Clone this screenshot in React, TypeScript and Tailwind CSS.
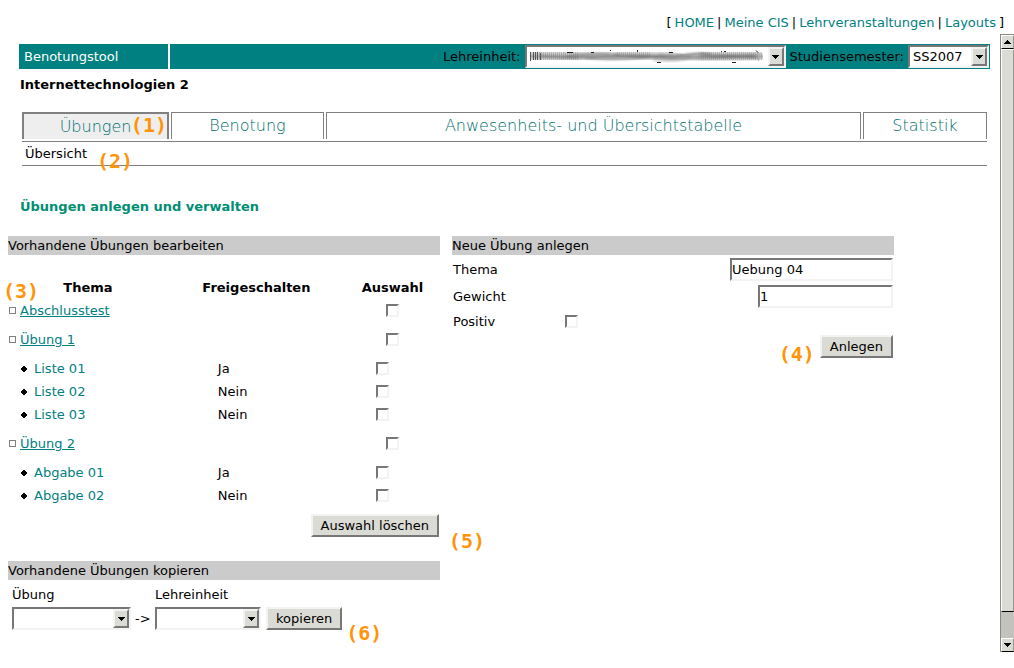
import React, { useId } from "react";

function Marker({ n, className }: { n: number; className: string }) {
  return (
    <span
      className={`pointer-events-none absolute font-['DejaVu_Sans_Mono',monospace] text-xl leading-[22px] font-bold text-[#ff9408] ${className}`}
    >
      ({n})
    </span>
  );
}

function Select({ label, options, className }: { label: string; options: string[]; className: string }) {
  return (
    <span
      className={`relative block h-[23px] border-2 border-t-[#777] border-l-[#777] border-r-[#f3f3f3] border-b-[#f3f3f3] bg-white ${className}`}
    >
      <select aria-label={label} className="block h-full w-full appearance-none bg-white pr-4 pl-[3px] text-[13px] leading-[19px] text-black outline-none">
        {options.map((o) => (
          <option key={o}>{o}</option>
        ))}
      </select>
      <span className="pointer-events-none absolute top-0 right-0 flex h-[19px] w-4 items-center justify-center border-2 border-t-[#f3f3f3] border-l-[#f3f3f3] border-r-[#777] border-b-[#777] bg-[#dbdbd5]">
        <svg width="7" height="4" viewBox="0 0 7 4" shapeRendering="crispEdges" aria-hidden="true">
          <path d="M0 0h7v1h-1v1h-1v1h-1v1h-1v-1h-1v-1h-1v-1h-1z" />
        </svg>
      </span>
    </span>
  );
}

function Button({ children }: { children: React.ReactNode }) {
  return (
    <button
      type="button"
      className="block h-[23px] border-2 border-t-[#f3f3f3] border-l-[#f3f3f3] border-r-[#777] border-b-[#777] bg-[#dbdbd5] px-2 text-[13px] leading-[19px] whitespace-nowrap text-black"
    >
      {children}
    </button>
  );
}

function Check({ label, id }: { label?: string; id?: string }) {
  return (
    <input
      type="checkbox"
      id={id}
      aria-label={label}
      className="block h-[13px] w-[13px] appearance-none border-2 border-t-[#777] border-l-[#777] border-r-[#f3f3f3] border-b-[#f3f3f3] bg-white checked:bg-gray-600"
    />
  );
}

function Smudge() {
  return (
    <svg
      className="pointer-events-none absolute top-[4px] left-1 h-[15px] w-[236px]"
      viewBox="0 0 236 15"
      aria-hidden="true"
    >
      <defs>
        <linearGradient id="smear" x1="0" x2="0" y1="0" y2="1">
          <stop offset="0" stopColor="#e0e0e0" />
          <stop offset="0.5" stopColor="#a8a8a8" />
          <stop offset="1" stopColor="#ececec" />
        </linearGradient>
        <pattern id="hatch" width="2" height="15" patternUnits="userSpaceOnUse">
          <path d="M0.5 0v15" stroke="#666" strokeWidth="1" opacity="0.3" />
        </pattern>
        <filter id="soft" x="-5%" y="-20%" width="110%" height="140%">
          <feGaussianBlur stdDeviation="0.8" />
        </filter>
      </defs>
      <path d="M1 3h142l12 2 18-2h60v8l-20 1h-40l-30-1H1z" fill="url(#smear)" />
      <path d="M10 3h40v8H10zM88 3h34v5H88zM172 3h58v8h-58z" fill="url(#hatch)" />
      <path d="M1.5 3v9M4.5 3v8M6.5 3v8M8.5 3v8M11.5 4v7" stroke="#555" strokeWidth="1" />
      <g fill="none" stroke="#777" strokeWidth="1.2" filter="url(#soft)">
        <path d="M12 7q30 3 56 1t52-1t46 2t62-2" />
        <path d="M32 9q22-5 50-4M56 9q30 3 66-1M84 5q24 5 60 1M118 7q18 4 44 1M142 8q24-5 40-3M166 9q30-3 62 0M170 6q26 1 56 0" />
        <path d="M124 11q22 2 40-2M130 5q20 6 50 4" stroke="#999" />
      </g>
      <path
        d="M38 3.5h6M62 3.5h3M81 2l1-1M108.5 1v2M140 3.5h4M128 13.5h4M192 2.5h1M195 2.5h2M203 13.5h4M227 1.5l2 2"
        stroke="#222"
        fill="none"
      />
      <path d="M229.5 4q2 4 0 8M232.5 4q2 4 0 7" stroke="#aaa" fill="none" />
    </svg>
  );
}

const barLabel = "text-[13px] leading-5 whitespace-nowrap text-black";
const teal = "text-[#008080]";
const tabText = "text-center font-extralight text-[#006e6e]";

function PanelTitle({ children }: { children: React.ReactNode }) {
  return <h2 className="h-[19px] bg-[#cbcbcb] text-[13px] leading-[19px]">{children}</h2>;
}

const tabs = ["Benotung", "Anwesenheits- und Übersichtstabelle", "Statistik"];

const groups = [
  { name: "Abschlusstest", items: [] },
  { name: "Übung 1", items: [["Liste 01", "Ja"], ["Liste 02", "Nein"], ["Liste 03", "Nein"]] },
  { name: "Übung 2", items: [["Abgabe 01", "Ja"], ["Abgabe 02", "Nein"]] },
];

function Scrollbar() {
  const face = "border border-t-white border-l-white border-r-[#99998f] border-b-black bg-[#dbdbd5]";
  return (
    <div className="flex w-[14px] shrink-0 flex-col border-t border-l border-[#8a8a84] bg-[#c3c2bd]">
      <button type="button" aria-label="Nach oben" className={`flex h-[14px] items-center justify-center ${face}`}>
        <svg width="7" height="4" viewBox="0 0 7 4" shapeRendering="crispEdges" aria-hidden="true">
          <path d="M0 4h7v-1h-1v-1h-1v-1h-1v-1h-1v1h-1v1h-1v1h-1z" />
        </svg>
      </button>
      <div className={`flex-1 ${face}`} />
      <div className="h-[26px]" />
      <button type="button" aria-label="Nach unten" className={`flex h-[14px] items-center justify-center ${face}`}>
        <svg width="7" height="4" viewBox="0 0 7 4" shapeRendering="crispEdges" aria-hidden="true">
          <path d="M0 0h7v1h-1v1h-1v1h-1v1h-1v-1h-1v-1h-1v-1h-1z" />
        </svg>
      </button>
    </div>
  );
}

export default function App() {
  const id = useId();
  const field =
    "h-[23px] border-2 border-t-[#777] border-l-[#777] border-r-[#f3f3f3] border-b-[#f3f3f3] bg-white text-[13px] leading-[19px] outline-none";
  return (
    <div className="flex min-h-screen flex-col bg-white pb-4 font-['DejaVu_Sans',sans-serif] text-[13px] leading-5 text-black">
      <nav className="flex h-[34px] justify-end gap-[3px] pt-[13px] pr-[10px] leading-5 whitespace-nowrap">
        <span>[</span>
        <a href="#home" className={teal}>HOME</a>
        <span>|</span>
        <a href="#cis" className={teal}>Meine CIS</a>
        <span>|</span>
        <a href="#lv" className={teal}>Lehrveranstaltungen</a>
        <span>|</span>
        <a href="#layouts" className={teal}>Layouts</a>
        <span>]</span>
      </nav>

      <div className="flex flex-1">
        <main className="min-w-0 flex-1 pt-[10px]">
          <header className="mr-[10px] ml-[19px] flex h-[25px] gap-[2px]">
            <div className="flex w-[149px] items-center bg-[#008080] pl-[5px] text-white">Benotungstool</div>
            <div className="flex flex-1 items-center justify-end gap-1 bg-[#008080] pr-px">
              <span className={barLabel}>Lehreinheit:</span>
              <span className="relative block">
                <Select label="Lehreinheit" options={[""]} className="w-[261px]" />
                <Smudge />
              </span>
              <span className={barLabel}>Studiensemester:</span>
              <Select label="Studiensemester" options={["SS2007", "WS2007"]} className="w-[81px]" />
            </div>
          </header>

          <h1 className="mt-[6px] ml-5 leading-5 font-bold">Internettechnologien 2</h1>

          <div className="mt-[17px] mr-[13px] ml-[22px]">
            <nav className="grid grid-cols-[147fr_153fr_535fr_124fr] gap-[2px] text-base leading-[26px]">
              <a
                href="#uebungen"
                className={`relative block h-[27px] border-2 border-b-0 border-[#808080] bg-[#eee] ${tabText}`}
              >
                Übungen
                <Marker n={1} className="top-0 right-0" />
              </a>
              {tabs.map((t) => (
                <a key={t} href="#tab" className={`block h-[27px] border border-b-0 border-[#808080] ${tabText}`}>
                  {t}
                </a>
              ))}
            </nav>
            <div className="relative mt-[2px] h-[25px] border-y border-[#808080] pl-[3px] leading-6">
              Übersicht
              <Marker n={2} className="top-[8px] left-[75px]" />
            </div>
          </div>

          <h2 className="mt-[31px] ml-5 leading-5 font-bold text-[#008e73]">Übungen anlegen und verwalten</h2>

          <div className="mt-[19px] grid grid-cols-[432fr_442fr] gap-3 pr-[106px] pl-2">
            <div>
              <section className="relative">
                <PanelTitle>Vorhandene Übungen bearbeiten</PanelTitle>
                <Marker n={3} className="top-[44px] left-[-5px]" />
                <table className="mt-[21px] w-full table-fixed border-collapse">
                  <colgroup>
                    <col className="w-[37%]" />
                    <col className="w-[41%]" />
                    <col className="w-[22%]" />
                  </colgroup>
                  <thead>
                    <tr className="h-[23px] leading-5">
                      <th>Thema</th>
                      <th>Freigeschalten</th>
                      <th>Auswahl</th>
                    </tr>
                  </thead>
                  {groups.map((g) => (
                    <tbody key={g.name}>
                      <tr className="h-[29px]">
                        <td className="p-0 pb-[6px]">
                          <span className="flex items-center gap-1">
                            <span className="ml-px h-[7px] w-[7px] border border-[#808080]" />
                            <a href="#g" className={`underline ${teal}`}>{g.name}</a>
                          </span>
                        </td>
                        <td />
                        <td className="p-0 pb-[6px]">
                          <span className="flex justify-center"><Check label={g.name} /></span>
                        </td>
                      </tr>
                      {g.items.map(([n, s]) => (
                        <tr key={n} className="h-[23px] last:h-[29px] last:[&>td]:pb-[6px]">
                          <td className="pl-[13px]">
                            <span className="flex items-center gap-[7px]">
                              <svg width="6" height="6" viewBox="0 0 6 6" aria-hidden="true">
                                <path d="M2 0h2v1h1v1h1v2h-1v1h-1v1h-2v-1h-1v-1h-1v-2h1v-1h1z" />
                              </svg>
                              <a href="#i" className={teal}>{n}</a>
                            </span>
                          </td>
                          <td className="pl-[50px]">{s}</td>
                          <td className="pl-[31px]"><Check label={n} /></td>
                        </tr>
                      ))}
                    </tbody>
                  ))}
                </table>
                <div className="mt-px flex justify-end pr-px">
                  <Button>Auswahl löschen</Button>
                </div>
                <Marker n={5} className="right-[-45px] bottom-[-15px]" />
              </section>

              <section className="mt-6">
                <PanelTitle>Vorhandene Übungen kopieren</PanelTitle>
                <div className="mt-[5px] grid w-max grid-cols-[119px_16px_107px_auto] items-center gap-x-1 gap-y-[2px] pl-1">
                  <span className="col-span-2">Übung</span>
                  <span className="col-span-2">Lehreinheit</span>
                  <Select label="Übung" options={[""]} className="w-[119px]" />
                  <span>-&gt;</span>
                  <Select label="Lehreinheit kopieren" options={[""]} className="w-[106px]" />
                  <span className="relative">
                    <Button>kopieren</Button>
                    <Marker n={6} className="top-[15px] left-full ml-1" />
                  </span>
                </div>
              </section>
            </div>

            <section>
              <PanelTitle>Neue Übung anlegen</PanelTitle>
              <form className="flex flex-col gap-1 px-px pt-[3px]">
                <div className="flex items-center justify-between">
                  <label htmlFor={`${id}t`}>Thema</label>
                  <input id={`${id}t`} defaultValue="Uebung 04" className={`w-[163px] ${field}`} />
                </div>
                <div className="flex items-center justify-between">
                  <label htmlFor={`${id}g`}>Gewicht</label>
                  <input id={`${id}g`} defaultValue="1" className={`w-[135px] ${field}`} />
                </div>
                <div className="flex h-[19px] items-center">
                  <label htmlFor={`${id}p`} className="w-[112px]">Positiv</label>
                  <Check id={`${id}p`} />
                </div>
                <div className="relative self-end">
                  <Marker n={4} className="top-[8px] right-full mr-[5px]" />
                  <Button>Anlegen</Button>
                </div>
              </form>
            </section>
          </div>
        </main>
        <Scrollbar />
      </div>
    </div>
  );
}
